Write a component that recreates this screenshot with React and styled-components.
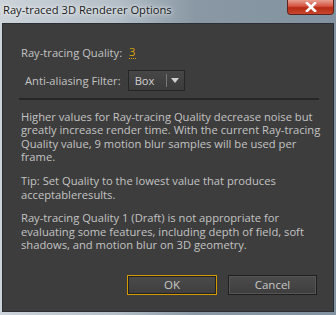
import React from 'react'
import styled, { createGlobalStyle } from 'styled-components'

const Global = createGlobalStyle`
  html, body { margin: 0; padding: 0; background: #6f7f8c; }
  body { font-family: "Open Sans", "DejaVu Sans", sans-serif; }
`

function App() {
  return (
    <>
      <Global />
      <Window>
        <TitleBar>
          <Title>Ray-traced 3D Renderer Options</Title>
          <CloseButton>
            <svg width="14" height="10" viewBox="0 0 14 10">
              <path d="M3 1 L11 9 M11 1 L3 9" stroke="#fff" strokeWidth="2.6" strokeLinecap="square" />
            </svg>
          </CloseButton>
        </TitleBar>
        <Body>
          <Row>
            <Label>Ray-tracing Quality:</Label>
            <Value>3</Value>
          </Row>
          <Row indent>
            <Label>Anti-aliasing Filter:</Label>
            <Select>
              <span>Box</span>
              <Arrow />
            </Select>
          </Row>
          <Divider />
          <Para>
            Higher values for Ray-tracing Quality decrease noise but<br />
            greatly increase render time. With the current Ray-tracing<br />
            Quality value, 9 motion blur samples will be used per<br />
            frame.
          </Para>
          <Para>
            Tip: Set Quality to the lowest value that produces<br />
            acceptableresults.
          </Para>
          <Para last>
            Ray-tracing Quality 1 (Draft) is not appropriate for<br />
            evaluating some features, including depth of field, soft<br />
            shadows, and motion blur on 3D geometry.
          </Para>
          <Buttons>
            <Button primary>OK</Button>
            <Button>Cancel</Button>
          </Buttons>
        </Body>
      </Window>
    </>
  )
}

export default App

const Window = styled.div`
  width: 336px;
  height: 315px;
  box-sizing: border-box;
  display: flex;
  flex-direction: column;
  background: linear-gradient(90deg, #cdd4da 0%, #b3bec7 35%, #8998a4 58%, #8392a0 100%);
  padding: 0 2px 3px 2px;
`

const TitleBar = styled.div`
  height: 23px;
  display: flex;
  align-items: flex-start;
  justify-content: space-between;
`

const Title = styled.div`
  font-family: "Open Sans", "DejaVu Sans", sans-serif;
  font-size: 11.2px;
  color: #1a1a1a;
  padding: 2px 0 0 1px;
  text-shadow: 0 0 6px rgba(255,255,255,0.9), 0 0 3px rgba(255,255,255,0.8);
`

const CloseButton = styled.div`
  width: 47px;
  height: 15px;
  box-sizing: border-box;
  border: 1px solid #5b2420;
  border-top: none;
  border-radius: 0 0 4px 4px;
  background: linear-gradient(180deg, #e8a090 0%, #d2533f 45%, #b72a14 55%, #c8472e 100%);
  display: flex;
  align-items: center;
  justify-content: center;
`

const Body = styled.div`
  flex: 1;
  background: #3d3d3d;
  border: 1px solid #2b2f33;
  padding: 18px 16px 0 18px;
  color: #c3c3c3;
  font-size: 11.2px;
`

const Row = styled.div`
  display: flex;
  align-items: center;
  gap: 7px;
  height: 21px;
  margin-left: ${p => (p.indent ? '4px' : '0')};
  margin-bottom: 7px;
`

const Label = styled.span`
  color: #c3c3c3;
`

const Value = styled.span`
  color: #d9a400;
  border-bottom: 1px dotted #d9a400;
  line-height: 12px;
`

const Select = styled.div`
  width: 57px;
  height: 21px;
  box-sizing: border-box;
  border: 1px solid #262626;
  background: linear-gradient(180deg, #474747, #3b3b3b);
  display: flex;
  align-items: center;
  padding-left: 6px;
  color: #d0d0d0;
  span { flex: 1; }
`

const Arrow = styled.div`
  width: 17px;
  height: 13px;
  border-left: 1px solid #777;
  display: flex;
  align-items: center;
  justify-content: center;
  &::after {
    content: '';
    border-left: 4px solid transparent;
    border-right: 4px solid transparent;
    border-top: 5px solid #d0d0d0;
  }
`

const Divider = styled.div`
  height: 2px;
  background: #262626;
  margin: 6px 0 10px -2px;
  width: 300px;
`

const Para = styled.p`
  margin: 0 0 ${p => (p.last ? '0' : '10.5px')} 0;
  line-height: 13.4px;
  white-space: nowrap;
`

const Buttons = styled.div`
  display: flex;
  justify-content: flex-end;
  gap: 11px;
  margin-top: 23px;
`

const Button = styled.div`
  width: ${p => (p.primary ? '90px' : '89px')};
  height: 20px;
  box-sizing: border-box;
  border: 1px solid ${p => (p.primary ? '#d49a00' : '#1f1f1f')};
  box-shadow: inset 0 0 0 1px ${p => (p.primary ? '#222' : '#555')};
  background: linear-gradient(180deg, #4b4b4b, #3e3e3e);
  color: #c8c8c8;
  display: flex;
  align-items: center;
  justify-content: center;
  font-size: 11.5px;
`
